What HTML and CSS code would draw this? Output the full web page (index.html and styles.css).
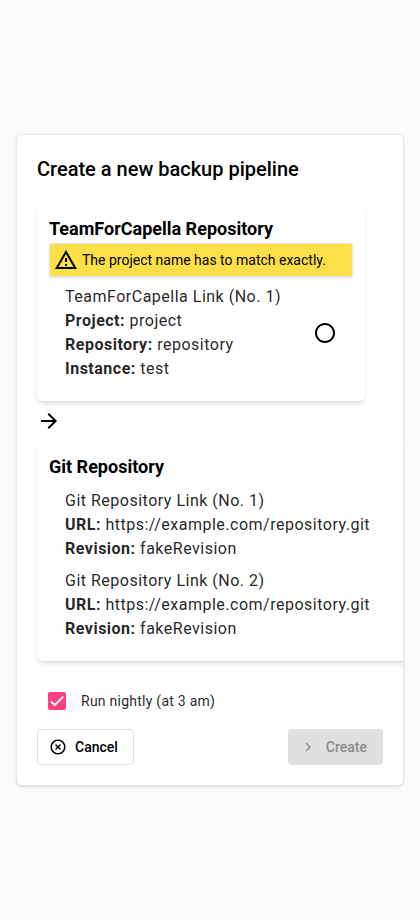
FILE: index.html
```
<!DOCTYPE html>
<html lang="en">
<head>
<meta charset="utf-8">
<title>Create a new backup pipeline</title>
<link rel="stylesheet" href="styles.css">
</head>
<body>
<main class="dialog">
  <h1>Create a new backup pipeline</h1>
  <section class="card t4c">
    <h2>TeamForCapella Repository</h2>
    <div class="warning">
      <svg viewBox="0 0 24 24" width="24" height="24"><path d="M12 5.99 19.53 19H4.47L12 5.99M12 2 1 21h22L12 2zm1 14h-2v2h2v-2zm0-6h-2v4h2v-4z"/></svg>
      <span>The project name has to match exactly.</span>
    </div>
    <div class="option">
      <div class="lines">
        <div>TeamForCapella Link (No. 1)</div>
        <div><b>Project:</b> project</div>
        <div><b>Repository:</b> repository</div>
        <div><b>Instance:</b> test</div>
      </div>
      <svg class="radio" viewBox="0 0 24 24" width="24" height="24"><path d="M12 2C6.480 2 2 6.480 2 12s4.480 10 10 10 10-4.480 10-10S17.520 2 12 2zm0 18c-4.420 0-8-3.580-8-8s3.580-8 8-8 8 3.580 8 8-3.580 8-8 8z"/></svg>
    </div>
  </section>
  <svg class="arrow" viewBox="0 0 24 24" width="24" height="24"><path d="m12 4-1.410 1.410L16.170 11H4v2h12.170l-5.580 5.590L12 20l8-8z"/></svg>
  <section class="card git">
    <h2>Git Repository</h2>
    <div class="lines">
      <div>Git Repository Link (No. 1)</div>
      <div><b>URL:</b> https://example.com/repository.git</div>
      <div><b>Revision:</b> fakeRevision</div>
    </div>
    <div class="lines">
      <div>Git Repository Link (No. 2)</div>
      <div><b>URL:</b> https://example.com/repository.git</div>
      <div><b>Revision:</b> fakeRevision</div>
    </div>
  </section>
  <div class="check-row">
    <span class="checkbox"><svg viewBox="0 0 24 24" width="14" height="14"><path d="M1.730 12.910 8.100 19.280 22.790 4.590"/></svg></span>
    <span>Run nightly (at 3 am)</span>
  </div>
  <div class="actions">
    <button class="cancel"><svg viewBox="0 0 24 24" width="18" height="18"><path d="M14.590 8 12 10.590 9.410 8 8 9.410 10.590 12 8 14.590 9.410 16 12 13.410 14.590 16 16 14.590 13.410 12 16 9.410 14.590 8zM12 2C6.470 2 2 6.470 2 12s4.470 10 10 10 10-4.470 10-10S17.530 2 12 2zm0 18c-4.410 0-8-3.590-8-8s3.590-8 8-8 8 3.590 8 8-3.590 8-8 8z"/></svg>Cancel</button>
    <button class="create" disabled><svg viewBox="0 0 24 24" width="18" height="18"><path d="M10 6 8.590 7.410 13.170 12l-4.580 4.590L10 18l6-6z"/></svg>Create</button>
  </div>
</main>
</body>
</html>
```
FILE: styles.css
```
* {
  box-sizing: border-box;
}

body {
  margin: 0;
  height: 920px;
  padding: 0 16px;
  display: flex;
  flex-direction: column;
  justify-content: center;
  background: #fafafa;
  color: rgba(0, 0, 0, 0.87);
  font: 400 16px/24px Roboto, sans-serif;
}

svg {
  display: block;
  flex: none;
  fill: currentColor;
}

.dialog {
  height: 652px;
  padding: 20px;
  overflow: hidden;
  border: 1px solid #e5e7eb;
  border-radius: 6px;
  background: #fff;
  box-shadow: 0 1px 3px rgba(0, 0, 0, 0.1), 0 1px 2px -1px rgba(0, 0, 0, 0.1);
}

h1 {
  margin: -2px 0 20px;
  font: 500 20px/32px Roboto, sans-serif;
  color: #000;
}

h2 {
  margin: 0;
  font: 700 18px/24px Roboto, sans-serif;
  color: #000;
}

.card {
  padding: 12px;
  border-radius: 6px;
  box-shadow: 0 4px 6px -1px rgba(0, 0, 0, 0.1), 0 2px 4px -2px rgba(0, 0, 0, 0.1);
  background: #fff;
}

.t4c {
  width: 328px;
  height: 196px;
}

.git {
  width: 380px;
  height: 220px;
  padding-top: 14px;
}

.warning {
  display: flex;
  align-items: center;
  gap: 4px;
  height: 34px;
  margin-top: 2px;
  padding: 0 4px;
  border: 1px solid #e5e7eb;
  border-radius: 3px;
  background: #fde047;
  color: #000;
  font-size: 14px;
  box-shadow: 0 1px 3px rgba(0, 0, 0, 0.1), 0 1px 2px -1px rgba(0, 0, 0, 0.1);
}

.option {
  display: flex;
  align-items: center;
  justify-content: space-between;
  padding-right: 16px;
}

.lines {
  padding: 8px 0 0 16px;
  letter-spacing: 0.5px;
  white-space: nowrap;
}

.radio {
  margin-top: 8px;
  color: #000;
}

.git h2 + .lines {
  padding-top: 10px;
}

.arrow {
  margin: 8px 0;
  color: #000;
}

.check-row {
  display: flex;
  align-items: center;
  gap: 15px;
  height: 40px;
  margin-top: 20px;
  padding-left: 11px;
  font-size: 14px;
  letter-spacing: 0.25px;
}

.checkbox {
  width: 18px;
  height: 18px;
  padding: 2px;
  border-radius: 2px;
  background: #ff4081;
}

.checkbox path {
  fill: none;
  stroke: #fff;
  stroke-width: 3.2;
}

.actions {
  display: flex;
  justify-content: space-between;
  margin-top: 8px;
}

button {
  display: flex;
  align-items: center;
  gap: 8px;
  height: 36px;
  border: 1px solid #e0e0e0;
  border-radius: 4px;
  padding: 0 15px 0 11px;
  background: #fff;
  color: #000;
  font: 500 14px/20px Roboto, sans-serif;
}

.create {
  gap: 9px;
  padding: 0 16px 0 11px;
  border: 0;
  background: #e0e0e0;
  color: #8b8b8b;
}
```
